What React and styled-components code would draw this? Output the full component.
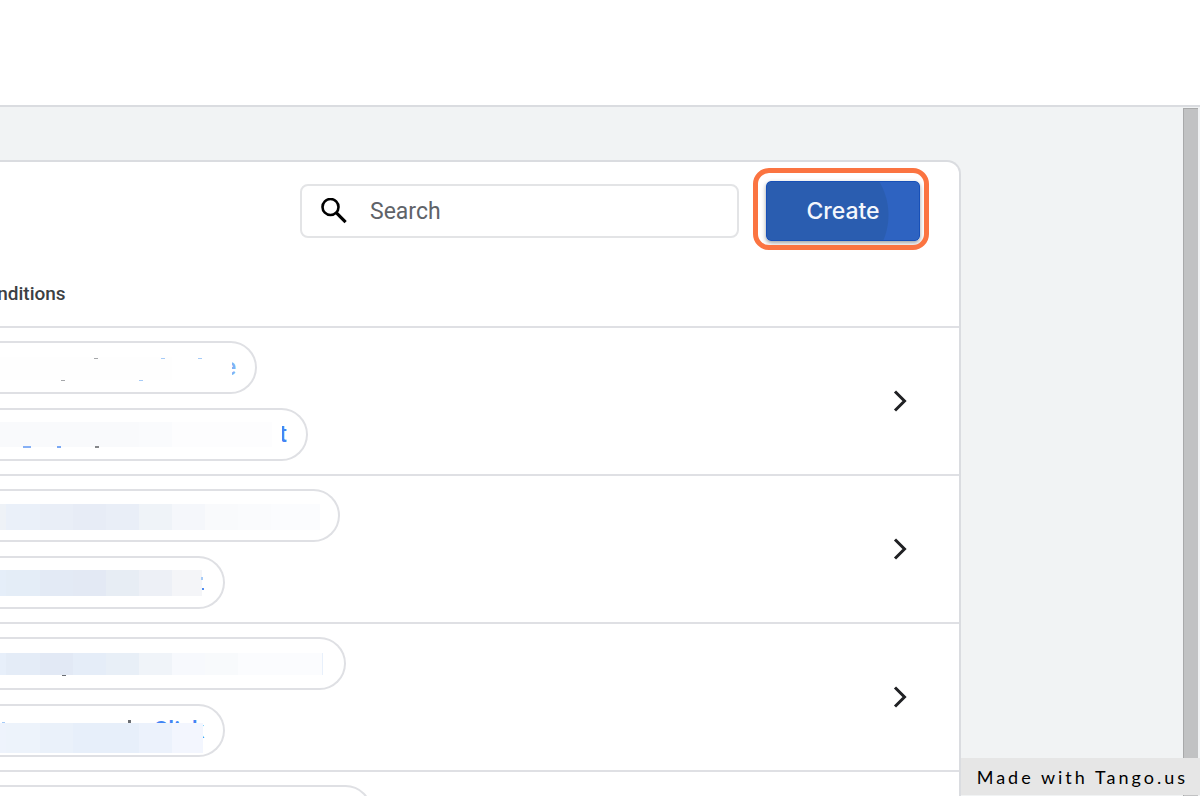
import styled, { createGlobalStyle } from "styled-components";

const GlobalStyle = createGlobalStyle`
  * {
    box-sizing: border-box;
  }

  body {
    margin: 0;
    overflow: hidden;
    font-family: Roboto, "Liberation Sans", sans-serif;
    background-color: #fff;
    color: #3c4043;
  }
`;

const BLUE = "#4f8bf0";
const PALE_BLUE = "#a6cbf7";
const DARK = "#6b6e73";

// cells: [x, width, color], specks: [x, y, width, height, color]
const rows = [
  [
    {
      width: 257,
      text: "e",
      pale: true,
      hidden: 232,
      top: 14,
      height: 23,
      cells: [[0, 172, "#fefefe"]],
      specks: [
        [94, 15, 4, 1, "#a5a7aa"],
        [161, 15, 4, 1, PALE_BLUE],
        [198, 15, 4, 1, PALE_BLUE],
        [61, 37, 4, 1, "#a5a7aa"],
        [139, 37, 4, 1, PALE_BLUE],
      ],
    },
    {
      width: 308,
      text: "t",
      hidden: 282,
      top: 12,
      height: 25,
      cells: [
        [0, 139, "#f9fafc"],
        [139, 33, "#fafbfd"],
        [172, 100, "#fdfdfe"],
      ],
      specks: [
        [23, 36, 8, 2, "#86b0f5"],
        [57, 36, 4, 2, "#7aa8f4"],
        [95, 36, 4, 2, "#85878a"],
      ],
    },
  ],
  [
    {
      width: 340,
      top: 13,
      height: 26,
      cells: [
        [0, 6, "#eef2f7"],
        [6, 34, "#eaf0f9"],
        [40, 33, "#e9eef7"],
        [73, 33, "#e7ecf6"],
        [106, 33, "#e9eef7"],
        [139, 33, "#eff3f8"],
        [172, 33, "#f5f7fb"],
        [205, 33, "#f9fafc"],
        [238, 33, "#fafbfd"],
        [271, 49, "#fbfcfe"],
      ],
      specks: [],
    },
    {
      width: 225,
      top: 12,
      height: 26,
      cells: [
        [0, 6, "#e5eef9"],
        [6, 34, "#e4edf7"],
        [40, 33, "#e3eaf5"],
        [73, 33, "#e3e9f4"],
        [106, 33, "#e7edf4"],
        [139, 33, "#edf0f6"],
        [172, 30, "#f4f5f8"],
      ],
      specks: [
        [201, 19, 2, 3, PALE_BLUE],
        [202, 30, 2, 2, BLUE],
      ],
    },
  ],
  [
    {
      width: 346,
      top: 14,
      height: 22,
      cells: [
        [0, 6, "#e7effa"],
        [6, 34, "#e4ecf7"],
        [40, 33, "#e2e9f5"],
        [73, 33, "#e5edf8"],
        [106, 33, "#e8eff7"],
        [139, 33, "#f0f4f9"],
        [172, 33, "#f7f9fd"],
        [205, 33, "#f8fafc"],
        [238, 84, "#fbfcfe"],
        [322, 1, "#e8f0fb"],
      ],
      specks: [[62, 36, 4, 1, DARK]],
    },
    {
      width: 225,
      text: "Click",
      hidden: 0,
      top: 17,
      height: 30,
      cells: [
        [0, 6, "#eef3fc"],
        [6, 34, "#edf3fb"],
        [40, 33, "#eaf1fa"],
        [73, 66, "#e7effa"],
        [139, 33, "#ecf2fc"],
        [172, 31, "#f3f6fe"],
      ],
      specks: [
        [2, 16, 3, 1, PALE_BLUE],
        [128, 14, 3, 3, DARK],
      ],
    },
  ],
  [{ width: 372, top: 0, height: 0, cells: [], specks: [] }],
];

const Page = styled.div`
  display: flex;
  flex-direction: column;
  height: 100vh;
  overflow: hidden;
`;

const TopBar = styled.header`
  flex: none;
  height: 107px;
  border-bottom: 2px solid #dadce0;
  background-color: #fff;
`;

const Body = styled.div`
  display: flex;
  flex: 1;
  min-height: 0;
  background-color: #f1f3f4;
`;

const Main = styled.main`
  flex: 1;
  min-width: 0;
  padding: 53px 222px 0 0;
  overflow: hidden;
`;

const ScrollTrack = styled.div`
  flex: none;
  width: 17px;
  padding: 1px 2px 0 0;
`;

const ScrollThumb = styled.div`
  height: 100%;
  background-color: #c1c2c3;
  border-left: 1px solid #a8a9aa;
  border-top: 1px solid #a8a9aa;
`;

const Card = styled.section`
  border: 2px solid #dadce0;
  border-left: none;
  border-top-right-radius: 14px;
  background-color: #fff;
`;

const Toolbar = styled.div`
  display: flex;
  align-items: center;
  justify-content: flex-end;
  gap: 27px;
  padding: 19px 39px 0 0;
`;

const SearchBox = styled.label`
  display: flex;
  align-items: center;
  gap: 23px;
  width: 439px;
  height: 54px;
  padding: 0 19px;
  border: 2px solid #e3e4e6;
  border-radius: 8px;
  color: #000;

  svg {
    flex: none;
  }
`;

const SearchInput = styled.input`
  flex: 1;
  min-width: 0;
  padding: 2px 0 0;
  border: none;
  outline: none;
  background: transparent;
  font-family: inherit;
  font-size: 23px;
  line-height: 28px;
  color: #3c4043;

  &::placeholder {
    color: #5f6368;
    opacity: 1;
  }
`;

const Highlight = styled.div`
  position: relative;

  &::after {
    content: "";
    position: absolute;
    inset: -13px -9px -9px -13px;
    border: 5px solid #fb7441;
    border-radius: 16px;
    pointer-events: none;
  }
`;

const CreateButton = styled.button`
  display: block;
  width: 154px;
  height: 60px;
  padding: 0;
  border: 1px solid #1750b8;
  border-radius: 5px;
  background:
    linear-gradient(to right, #2a5db0 66px, transparent 66px),
    radial-gradient(circle at 56px 33px, #2a5db0 65px, #2e63c1 66px);
  box-shadow: 0 2px 4px rgba(60, 64, 67, 0.5);
  color: #f4f7fc;
  font-family: Inter, Roboto, sans-serif;
  font-size: 23px;
  font-weight: 500;
  line-height: 30px;
  cursor: pointer;
`;

const Table = styled.table`
  width: 100%;
  border-spacing: 0;
`;

const HeadCell = styled.th`
  height: 87px;
  padding: 20px 0 0;
  border-bottom: 2px solid #dfe0e4;
  text-align: left;
  vertical-align: middle;
  font-size: 19px;
  font-weight: 500;
  line-height: 24px;
`;

const HeadLabel = styled.span`
  display: block;
  margin-left: -26px;
`;

const Cell = styled.td`
  padding: 13px 0;
  border-bottom: 2px solid #dfe0e4;
  vertical-align: top;
`;

const ActionCell = styled(Cell)`
  width: 100px;
  vertical-align: middle;
`;

const Pills = styled.div`
  display: flex;
  flex-direction: column;
  gap: 14px;
`;

const Pill = styled.div`
  position: relative;
  display: flex;
  align-items: center;
  justify-content: flex-end;
  width: ${(props) => props.$width}px;
  height: 53px;
  padding-right: 19px;
  border: 2px solid #dfe0e4;
  border-left: none;
  border-radius: 0 27px 27px 0;
  font-size: 23px;
  font-weight: 500;
  line-height: 28px;
  color: ${(props) => (props.$pale ? "#7fb2f5" : "#4285f4")};
`;

const Mosaic = styled.svg`
  position: absolute;
  inset: 0;
  width: 100%;
  height: 100%;
`;

const OpenButton = styled.button`
  display: block;
  padding: 8px;
  margin-left: 26px;
  border: none;
  background: none;
  color: #202124;
  cursor: pointer;

  svg {
    display: block;
  }
`;

const Watermark = styled.footer`
  position: fixed;
  right: 0;
  bottom: 1px;
  padding: 6px 12px 4px 16px;
  background-color: #e6e6e6;
  color: #000;
  font-family: Lato, "Open Sans", sans-serif;
  font-size: 18px;
  line-height: 27px;
  letter-spacing: 3px;
  white-space: nowrap;
`;

function SearchIcon() {
  return (
    <svg width="26" height="26" viewBox="0 0 26 26" fill="none" aria-hidden="true">
      <circle cx="9.5" cy="9" r="8" stroke="currentColor" strokeWidth="2.6" />
      <path d="M15.2 14.7L24.6 24.1" stroke="currentColor" strokeWidth="3.2" />
    </svg>
  );
}

function ChevronIcon() {
  return (
    <svg width="15" height="22" viewBox="0 0 15 22" fill="none" aria-hidden="true">
      <path d="M2 1.5L11.5 11L2 20.5" stroke="currentColor" strokeWidth="3" />
    </svg>
  );
}

function Condition({ item }) {
  return (
    <Pill $width={item.width} $pale={item.pale}>
      {item.text}
      <Mosaic shapeRendering="crispEdges" aria-hidden="true">
        {item.hidden > 0 && (
          <rect x="0" y="0" width={item.hidden} height="49" fill="#fff" />
        )}
        {item.cells.map(([x, width, color]) => (
          <rect
            key={x}
            x={x}
            y={item.top}
            width={width}
            height={item.height}
            fill={color}
          />
        ))}
        {item.specks.map(([x, y, width, height, color]) => (
          <rect
            key={`${x}-${y}`}
            x={x}
            y={y}
            width={width}
            height={height}
            fill={color}
          />
        ))}
      </Mosaic>
    </Pill>
  );
}

function App() {
  return (
    <Page>
      <GlobalStyle />
      <TopBar />
      <Body>
        <Main>
          <Card>
            <Toolbar>
              <SearchBox>
                <SearchIcon />
                <SearchInput type="text" placeholder="Search" aria-label="Search" />
              </SearchBox>
              <Highlight>
                <CreateButton type="button">Create</CreateButton>
              </Highlight>
            </Toolbar>

            <Table>
              <thead>
                <tr>
                  <HeadCell colSpan={2}>
                    <HeadLabel>Conditions</HeadLabel>
                  </HeadCell>
                </tr>
              </thead>
              <tbody>
                {rows.map((items, i) => (
                  <tr key={i}>
                    <Cell>
                      <Pills>
                        {items.map((item, j) => (
                          <Condition key={j} item={item} />
                        ))}
                      </Pills>
                    </Cell>
                    <ActionCell>
                      {items.length > 1 && (
                        <OpenButton type="button" aria-label="Open">
                          <ChevronIcon />
                        </OpenButton>
                      )}
                    </ActionCell>
                  </tr>
                ))}
              </tbody>
            </Table>
          </Card>
        </Main>
        <ScrollTrack>
          <ScrollThumb />
        </ScrollTrack>
      </Body>
      <Watermark>Made with Tango.us</Watermark>
    </Page>
  );
}

export default App;
